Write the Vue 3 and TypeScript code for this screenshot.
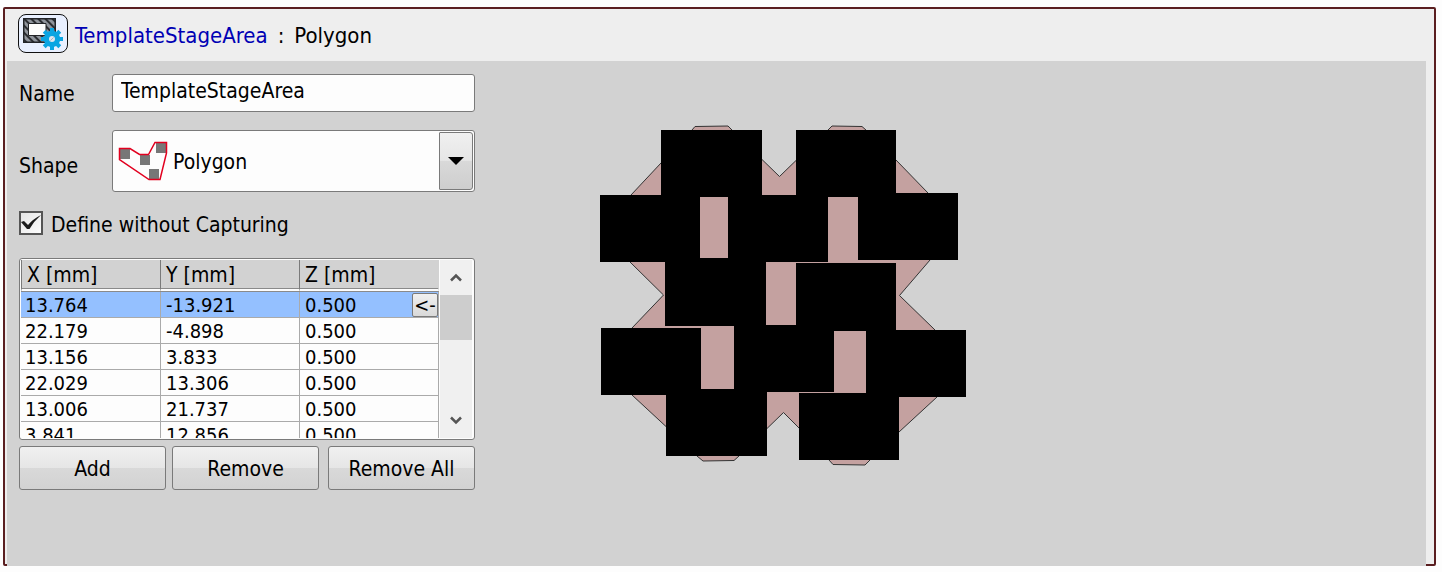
<script setup lang="ts">
import { ref } from 'vue'

interface Point {
  x: string
  y: string
  z: string
}

const name = ref('TemplateStageArea')
const shape = ref('Polygon')
const withoutCapturing = ref(true)
const selected = ref(0)

const points = ref<Point[]>([
  { x: '13.764', y: '-13.921', z: '0.500' },
  { x: '22.179', y: '-4.898', z: '0.500' },
  { x: '13.156', y: '3.833', z: '0.500' },
  { x: '22.029', y: '13.306', z: '0.500' },
  { x: '13.006', y: '21.737', z: '0.500' },
  { x: '3.841', y: '12.856', z: '0.500' },
])

// Stage tiles: x, y, width, height
const tiles: number[][] = [
  [661, 130, 101, 67],
  [796, 130, 100, 67],
  [600, 195, 100, 67],
  [728, 195, 100, 67],
  [858, 193, 100, 67],
  [665, 258, 101, 68],
  [796, 263, 100, 68],
  [601, 328, 100, 67],
  [734, 325, 100, 67],
  [866, 330, 100, 67],
  [666, 389, 101, 67],
  [799, 393, 100, 67],
]

const outline =
  '692,130 695,126.5 728,126 732,130 762,159.5 779.5,176.5 796,160.5 828,130 832,126 862,126.5 866,130 ' +
  '896,160 928,193 930,260 899.5,295.5 935,330 937,397 899,432 870,460 865,465 833,464.5 829,460 ' +
  '799,428 783.5,412.5 767,428.5 739,456 734,460.5 703,461 697,456 666,426.5 632,395 632,328 ' +
  '663.5,295 630,262 631,195 661,163'
</script>

<template>
  <main class="frame">
    <header class="title">
      <span class="badge">
        <svg width="48" height="37" viewBox="0 0 48 37" aria-hidden="true">
          <defs>
            <pattern id="hatch" width="5" height="5" patternUnits="userSpaceOnUse" patternTransform="rotate(-45)">
              <rect width="5" height="5" fill="#8f949c" />
              <rect width="2" height="5" fill="#2c2e33" />
            </pattern>
          </defs>
          <path d="M4.750 3.750H36.250V27.250H4.750Z" fill="url(#hatch)" stroke="#222428" stroke-width="1.500" />
          <path d="M9.500 8.500H27V20.500H9.500Z" fill="#fdfdfd" stroke="#222428" />
          <g transform="translate(33 24)">
            <g fill="#0aa5e2">
              <circle r="8.200" />
              <rect v-for="n in 8" :key="n" x="-2" y="-11" width="4" height="6" :transform="`rotate(${n * 45})`" />
            </g>
            <circle r="3" fill="#dfe6ee" />
            <path d="M-1.500 1.500L1.500-1.500" stroke="#aab3bd" />
          </g>
        </svg>
      </span>
      <a href="#" class="link">TemplateStageArea</a>
      <span>:</span>
      <span>Polygon</span>
    </header>

    <div class="panel">
      <form class="form" @submit.prevent>
        <div class="field">
          <label for="area-name">Name</label>
          <input id="area-name" v-model="name" class="text" type="text" />
        </div>

        <div class="field">
          <label for="area-shape" class="low">Shape</label>
          <div class="combo">
            <svg class="shape-icon" width="50" height="42" viewBox="0 0 50 42" aria-hidden="true">
              <g fill="#777">
                <rect x="2" y="9" width="10" height="10" />
                <rect x="22" y="15" width="10" height="10" />
                <rect x="38" y="3" width="10" height="10" />
                <rect x="31" y="29" width="10" height="10" />
              </g>
              <path d="M1.500 8.500H12L21.500 14.500H30.500L37 2.500H48.500V13L42 39.500H31L1.500 19.500Z" fill="none" stroke="#e2001f" stroke-width="1.500" />
            </svg>
            <select id="area-shape" v-model="shape">
              <option>Polygon</option>
            </select>
            <span class="drop">
              <svg width="16" height="8" viewBox="0 0 16 8" aria-hidden="true"><path d="M0 0H16L8 8Z" /></svg>
            </span>
          </div>
        </div>

        <label class="check">
          <span class="tick">
            <input v-model="withoutCapturing" type="checkbox" />
            <svg v-if="withoutCapturing" width="24" height="24" viewBox="0 0 24 24" aria-hidden="true">
              <path d="M2 11L5 10L9 14Q14 8 22 4Q15 10 10.500 18H8Z" fill="#1c1c1c" />
            </svg>
          </span>
          <span class="caption">Define without Capturing</span>
        </label>

        <div class="list">
          <div class="rows">
            <table>
              <thead>
                <tr><th scope="col">X [mm]</th><th scope="col">Y [mm]</th><th scope="col">Z [mm]</th></tr>
              </thead>
              <tbody>
                <tr v-for="(p, i) in points" :key="i" :class="{ selected: i === selected }" @click="selected = i">
                  <td>{{ p.x }}</td>
                  <td>{{ p.y }}</td>
                  <td>
                    <div class="last">
                      {{ p.z }}
                      <button v-if="i === selected" type="button" class="pick">&lt;-</button>
                    </div>
                  </td>
                </tr>
              </tbody>
            </table>
          </div>
          <div class="scroll">
            <button type="button" aria-label="Scroll up">
              <svg width="12" height="9" viewBox="0 0 12 9"><path d="M1 7.500L6 2.500L11 7.500" /></svg>
            </button>
            <div class="track"><div class="thumb"></div></div>
            <button type="button" aria-label="Scroll down">
              <svg width="12" height="9" viewBox="0 0 12 9"><path d="M1 1.500L6 6.500L11 1.500" /></svg>
            </button>
          </div>
        </div>

        <div class="actions">
          <div class="pair">
            <button type="button" class="push">Add</button>
            <button type="button" class="push">Remove</button>
          </div>
          <button type="button" class="push">Remove All</button>
        </div>
      </form>

      <svg class="stage" width="368" height="342" viewBox="599 125 368 342" role="img" aria-label="Stage area">
        <polygon :points="outline" fill="#c4a1a0" stroke="#333" />
        <g shape-rendering="crispEdges">
          <rect v-for="(t, i) in tiles" :key="i" :x="t[0]" :y="t[1]" :width="t[2]" :height="t[3]" />
        </g>
      </svg>
    </div>
  </main>
</template>

<style>
body {
  background: #fdfdfd;
}
</style>

<style scoped>
* {
  box-sizing: border-box;
}

.frame {
  display: flex;
  flex-direction: column;
  min-height: calc(100vh - 13px);
  margin: 7px 6px 0 3px;
  border: 2px solid #5a1e20;
  border-radius: 2px;
  background: #eee;
  color: #000;
  font: 21px/26px "DejaVu Sans Condensed", "Noto Sans", sans-serif;
}

button,
input,
select {
  margin: 0;
  color: inherit;
  font: inherit;
}

.title {
  display: flex;
  align-items: center;
  gap: 10px;
  height: 52px;
  padding: 2px 13px 0;
  font-size: 22px;
}

.badge {
  display: flex;
  width: 50px;
  height: 39px;
  margin: 0 -3px 6px 0;
  border: 1px solid #111;
  border-radius: 8px;
  background: #e9f0ff;
}

.link {
  color: #0000b4;
  text-decoration: none;
}

.panel {
  display: flex;
  flex: 1;
  align-items: flex-start;
  margin: 0 8px -4px 2px;
  padding: 13px 12px;
  background: #d2d2d2;
}

.form {
  flex: 0 0 456px;
}

.field {
  display: grid;
  grid-template-columns: 93px 1fr;
  align-items: center;
  margin-bottom: 18px;
}

.field label {
  padding-top: 2px;
}

.field .low {
  padding-top: 10px;
}

.text {
  width: 100%;
  height: 38px;
  padding: 0 8px 4px;
  border: 1px solid #7a7a7a;
  border-radius: 3px;
  background: #fdfdfd;
}

.combo {
  display: grid;
  grid-template-columns: 50px 1fr 34px;
  align-items: center;
  height: 62px;
  padding: 1px 1px 1px 5px;
  border: 1px solid #7a7a7a;
  border-radius: 3px;
  background: #fdfdfd;
}

.combo > * {
  grid-row: 1;
}

.shape-icon {
  grid-column: 1;
}

.combo select {
  grid-column: 1 / 4;
  width: 100%;
  height: 58px;
  padding: 2px 0 0 55px;
  border: 0;
  background: transparent;
  appearance: none;
}

.drop {
  display: flex;
  grid-column: 3;
  align-items: center;
  justify-content: center;
  height: 58px;
  border: 1px solid #7a7a7a;
  border-radius: 1px 3px 3px 1px;
  background: linear-gradient(#f0f0f0, #e6e6e6 49%, #d9d9d9 50%, #cecece);
  pointer-events: none;
}

.check {
  display: flex;
  align-items: center;
  gap: 8px;
  height: 26px;
  margin-bottom: 22px;
}

.caption {
  padding-top: 4px;
}

.tick {
  display: grid;
}

.tick > * {
  grid-area: 1 / 1;
}

.tick input {
  width: 24px;
  height: 24px;
  border: 2px solid #555;
  background: linear-gradient(135deg, #e4e4e4, #fdfdfd);
  appearance: none;
}

.tick svg {
  pointer-events: none;
}

.list {
  display: flex;
  height: 182px;
  margin-bottom: 6px;
  padding: 1px 2px 1px 1px;
  border: 1px solid #7a7a7a;
  border-radius: 3px;
  background: #fdfdfd;
}

.rows {
  flex: 1;
  overflow: hidden;
}

table {
  width: 100%;
  border-spacing: 0;
  table-layout: fixed;
}

th {
  height: 32px;
  padding: 3px 5px 0;
  border-right: 1px solid #7a7a7a;
  border-bottom: 4px double #8a8a8a;
  background: #d2d2d2 padding-box;
  font-weight: normal;
  line-height: 25px;
  text-align: left;
}

th:first-child {
  width: 140px;
  border-left: 1px solid #7a7a7a;
}

th:last-child {
  border-right-color: #d2d2d2;
}

td {
  height: 26px;
  padding: 1px 0 0 5px;
  border-right: 1px solid #aaa;
  border-bottom: 1px solid #aaa;
  font-size: 20px;
  line-height: 24px;
}

td:first-child {
  padding-left: 4px;
}

.selected td {
  background: #94c0ff;
}

.last {
  display: flex;
  justify-content: space-between;
  height: 24px;
}

.pick {
  width: 26px;
  padding: 0;
  border: 1px solid #7a7a7a;
  border-radius: 2px;
  background: linear-gradient(#f0f0f0, #d9d9d9);
  line-height: 22px;
}

.scroll {
  display: flex;
  flex: 0 0 32px;
  flex-direction: column;
  margin-left: 1px;
  background: #f0f0f0;
}

.scroll button {
  height: 35px;
  padding: 0;
  border: 0;
  background: transparent;
  line-height: 0;
}

.scroll path {
  fill: none;
  stroke: #555;
  stroke-width: 2.500;
}

.track {
  flex: 1;
}

.thumb {
  height: 45px;
  background: #cdcdcd;
}

.actions {
  display: grid;
  grid-template-columns: 300fr 147fr;
  gap: 9px;
}

.pair {
  display: grid;
  grid-template-columns: 1fr 1fr;
  gap: 6px;
}

.push {
  height: 44px;
  padding: 2px 0 0;
  border: 1px solid #7a7a7a;
  border-radius: 3px;
  background: linear-gradient(#f0f0f0, #e6e6e6 49%, #d9d9d9 50%, #d2d2d2);
}

.stage {
  flex: none;
  margin: 51px 0 0 124px;
}
</style>
